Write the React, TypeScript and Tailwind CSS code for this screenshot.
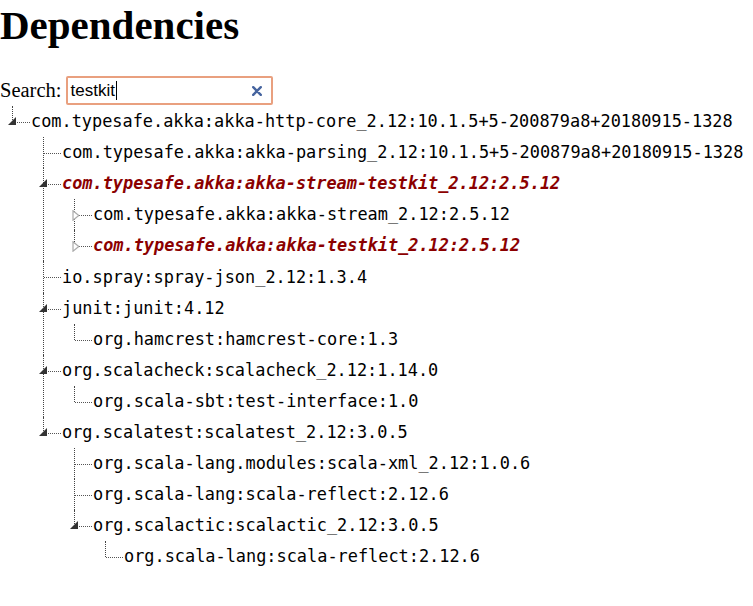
type Dep = {
  name: string
  match?: boolean
  state?: 'open' | 'closed' | 'leaf'
  children?: Dep[]
}

const tree: Dep = {
  name: 'com.typesafe.akka:akka-http-core_2.12:10.1.5+5-200879a8+20180915-1328',
  state: 'open',
  children: [
    { name: 'com.typesafe.akka:akka-parsing_2.12:10.1.5+5-200879a8+20180915-1328' },
    {
      name: 'com.typesafe.akka:akka-stream-testkit_2.12:2.5.12',
      match: true,
      state: 'open',
      children: [
        { name: 'com.typesafe.akka:akka-stream_2.12:2.5.12', state: 'closed' },
        { name: 'com.typesafe.akka:akka-testkit_2.12:2.5.12', match: true, state: 'closed' },
      ],
    },
    { name: 'io.spray:spray-json_2.12:1.3.4' },
    {
      name: 'junit:junit:4.12',
      state: 'open',
      children: [{ name: 'org.hamcrest:hamcrest-core:1.3' }],
    },
    {
      name: 'org.scalacheck:scalacheck_2.12:1.14.0',
      state: 'open',
      children: [{ name: 'org.scala-sbt:test-interface:1.0' }],
    },
    {
      name: 'org.scalatest:scalatest_2.12:3.0.5',
      state: 'open',
      children: [
        { name: 'org.scala-lang.modules:scala-xml_2.12:1.0.6' },
        { name: 'org.scala-lang:scala-reflect:2.12.6' },
        {
          name: 'org.scalactic:scalactic_2.12:3.0.5',
          state: 'open',
          children: [{ name: 'org.scala-lang:scala-reflect:2.12.6' }],
        },
      ],
    },
  ],
}

function Node({ dep, last }: { dep: Dep; last: boolean }) {
  const state = dep.state || 'leaf'
  return (
    <li className="relative">
      {/* vertical connector */}
      <span
        className={`absolute left-[12px] top-0 border-l border-dotted border-[#444] ${
          last ? 'h-[16px]' : 'bottom-0'
        }`}
      />
      <div className="relative flex h-[31.1px] items-center">
        {/* horizontal connector */}
        <span className="absolute left-[13px] top-[16px] w-[17px] border-t border-dotted border-[#555]" />
        {state === 'open' && (
          <svg className="absolute left-[8px] top-[11px]" width="8" height="8" viewBox="0 0 8 8">
            <polygon points="0,8 8,8 8,0" fill="#333" />
          </svg>
        )}
        {state === 'closed' && (
          <svg className="absolute left-[10px] top-[11px]" width="8" height="11" viewBox="0 0 8 11">
            <polygon points="1,0.8 6.8,5.5 1,10.2" fill="#fff" stroke="#aaa" strokeWidth="1.2" />
          </svg>
        )}
        <span
          className={`ml-[31px] whitespace-nowrap text-[16.9px] leading-none ${
            dep.match ? 'font-bold italic text-[#8b0000]' : 'text-black'
          }`}
          style={{ fontFamily: '"DejaVu Sans Mono", monospace' }}
        >
          {dep.name}
        </span>
      </div>
      {state === 'open' && dep.children && (
        <ul className="ml-[31px]">
          {dep.children.map((c, i) => (
            <Node key={i} dep={c} last={i === dep.children!.length - 1} />
          ))}
        </ul>
      )}
    </li>
  )
}

export default function App() {
  return (
    <div className="min-h-[606px] bg-white text-black">
      <h1
        className="m-0 pt-[2px] mb-[27px] text-[41px] font-bold leading-[47px]"
        style={{ fontFamily: '"Liberation Serif", serif' }}
      >
        Dependencies
      </h1>

      <div className="flex h-[29px] items-center" style={{ fontFamily: '"Liberation Serif", serif' }}>
        <span className="text-[20.5px] leading-none">Search:</span>
        <div className="ml-[5px] flex h-[29px] w-[207px] items-center rounded-[2px] border-2 border-[#e9a07f] pl-[2px] pr-[9px]">
          <span
            className="text-[17px] leading-none text-black"
            style={{ fontFamily: '"Liberation Sans", Arial, sans-serif' }}
          >
            testkit
          </span>
          <span className="ml-px h-[19px] w-px bg-black" />
          <svg className="ml-auto" width="10" height="10" viewBox="0 0 10 10">
            <path d="M1.2 1.2 L8.8 8.8 M8.8 1.2 L1.2 8.8" stroke="#46649f" strokeWidth="2.4" strokeLinecap="round" />
          </svg>
        </div>
      </div>

      <ul className="mt-[1px]">
        <Node dep={tree} last={true} />
      </ul>
    </div>
  )
}
